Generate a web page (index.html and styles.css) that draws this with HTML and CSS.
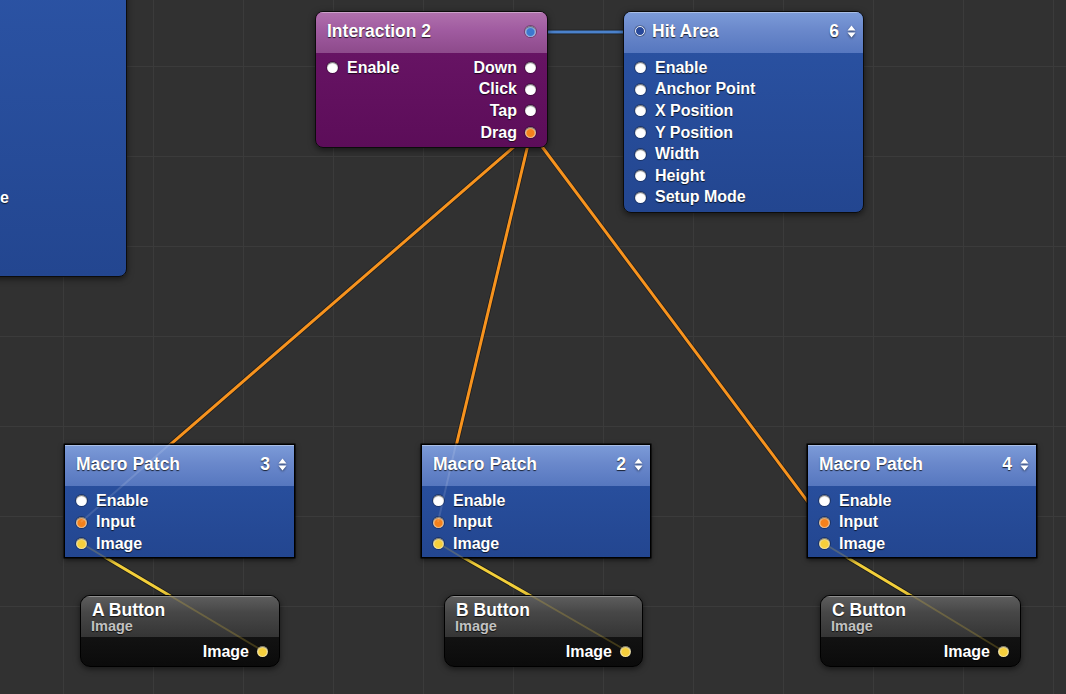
FILE: index.html
```html
<!DOCTYPE html>
<html lang="en">
<head>
  <meta charset="UTF-8">
  <title>Patch Editor</title>
  <link rel="stylesheet" href="styles.css">
</head>
<body>
  <div class="canvas">
    <!-- wires sit under the patches -->
    <svg class="wires" width="1066" height="694" viewBox="0 0 1066 694">
      <g class="wire-shade">
        <line x1="531" y1="132" x2="81" y2="522"/>
        <line x1="531" y1="132" x2="438" y2="522"/>
        <line x1="531" y1="132" x2="823" y2="522"/>
        <line x1="81" y1="543" x2="263" y2="651"/>
        <line x1="438" y1="543" x2="627" y2="651"/>
        <line x1="823" y1="543" x2="1003" y2="651"/>
        <line x1="531" y1="32" x2="639" y2="32"/>
      </g>
      <g class="wire-orange">
        <line x1="531" y1="132" x2="81" y2="522"/>
        <line x1="531" y1="132" x2="438" y2="522"/>
        <line x1="531" y1="132" x2="823" y2="522"/>
      </g>
      <g class="wire-yellow">
        <line x1="81" y1="543" x2="263" y2="651"/>
        <line x1="438" y1="543" x2="627" y2="651"/>
        <line x1="823" y1="543" x2="1003" y2="651"/>
      </g>
      <line class="wire-blue" x1="531" y1="32" x2="639" y2="32"/>
    </svg>

    <div class="node node-layer offscreen">
      <span class="offscreen-label">Image</span>
    </div>

    <div class="node node-interaction" style="left:315px;top:11px;width:233px;">
      <div class="node-head">
        <span class="node-title">Interaction 2</span>
        <span class="port port-blue"></span>
      </div>
      <div class="node-body">
        <div class="row">
          <div class="pin in"><span class="port"></span><span>Enable</span></div>
          <div class="pin out"><span>Down</span><span class="port"></span></div>
        </div>
        <div class="row row-end">
          <div class="pin out"><span>Click</span><span class="port"></span></div>
        </div>
        <div class="row row-end">
          <div class="pin out"><span>Tap</span><span class="port"></span></div>
        </div>
        <div class="row row-end">
          <div class="pin out"><span>Drag</span><span class="port port-orange"></span></div>
        </div>
      </div>
    </div>

    <div class="node node-layer" style="left:623px;top:11px;width:241px;">
      <div class="node-head">
        <span class="port port-hollow"></span>
        <span class="node-title">Hit Area</span>
        <span class="stepper">6
          <svg width="9" height="13" viewBox="0 0 9 13"><path d="M4.5 0.5L8.5 5.5H0.5Z M4.5 12.5L8.5 7.5H0.5Z" fill="#fff"/></svg>
        </span>
      </div>
      <div class="node-body">
        <div class="row"><div class="pin in"><span class="port"></span><span>Enable</span></div></div>
        <div class="row"><div class="pin in"><span class="port"></span><span>Anchor Point</span></div></div>
        <div class="row"><div class="pin in"><span class="port"></span><span>X Position</span></div></div>
        <div class="row"><div class="pin in"><span class="port"></span><span>Y Position</span></div></div>
        <div class="row"><div class="pin in"><span class="port"></span><span>Width</span></div></div>
        <div class="row"><div class="pin in"><span class="port"></span><span>Height</span></div></div>
        <div class="row"><div class="pin in"><span class="port"></span><span>Setup Mode</span></div></div>
      </div>
    </div>

    <div class="node node-layer node-macro" style="left:64px;top:444px;width:231px;">
      <div class="node-head">
        <span class="node-title">Macro Patch</span>
        <span class="stepper">3
          <svg width="9" height="13" viewBox="0 0 9 13"><path d="M4.5 0.5L8.5 5.5H0.5Z M4.5 12.5L8.5 7.5H0.5Z" fill="#fff"/></svg>
        </span>
      </div>
      <div class="node-body">
        <div class="row"><div class="pin in"><span class="port"></span><span>Enable</span></div></div>
        <div class="row"><div class="pin in"><span class="port port-orange"></span><span>Input</span></div></div>
        <div class="row"><div class="pin in"><span class="port port-yellow"></span><span>Image</span></div></div>
      </div>
    </div>

    <div class="node node-layer node-macro" style="left:421px;top:444px;width:230px;">
      <div class="node-head">
        <span class="node-title">Macro Patch</span>
        <span class="stepper">2
          <svg width="9" height="13" viewBox="0 0 9 13"><path d="M4.5 0.5L8.5 5.5H0.5Z M4.5 12.5L8.5 7.5H0.5Z" fill="#fff"/></svg>
        </span>
      </div>
      <div class="node-body">
        <div class="row"><div class="pin in"><span class="port"></span><span>Enable</span></div></div>
        <div class="row"><div class="pin in"><span class="port port-orange"></span><span>Input</span></div></div>
        <div class="row"><div class="pin in"><span class="port port-yellow"></span><span>Image</span></div></div>
      </div>
    </div>

    <div class="node node-layer node-macro" style="left:807px;top:444px;width:230px;">
      <div class="node-head">
        <span class="node-title">Macro Patch</span>
        <span class="stepper">4
          <svg width="9" height="13" viewBox="0 0 9 13"><path d="M4.5 0.5L8.5 5.5H0.5Z M4.5 12.5L8.5 7.5H0.5Z" fill="#fff"/></svg>
        </span>
      </div>
      <div class="node-body">
        <div class="row"><div class="pin in"><span class="port"></span><span>Enable</span></div></div>
        <div class="row"><div class="pin in"><span class="port port-orange"></span><span>Input</span></div></div>
        <div class="row"><div class="pin in"><span class="port port-yellow"></span><span>Image</span></div></div>
      </div>
    </div>

    <div class="node node-image" style="left:80px;top:595px;width:200px;">
      <div class="image-head">
        <span class="node-title">A Button</span>
        <span class="node-sub">Image</span>
      </div>
      <div class="image-body">
        <div class="pin out"><span>Image</span><span class="port port-yellow"></span></div>
      </div>
    </div>

    <div class="node node-image" style="left:444px;top:595px;width:199px;">
      <div class="image-head">
        <span class="node-title">B Button</span>
        <span class="node-sub">Image</span>
      </div>
      <div class="image-body">
        <div class="pin out"><span>Image</span><span class="port port-yellow"></span></div>
      </div>
    </div>

    <div class="node node-image" style="left:820px;top:595px;width:201px;">
      <div class="image-head">
        <span class="node-title">C Button</span>
        <span class="node-sub">Image</span>
      </div>
      <div class="image-body">
        <div class="pin out"><span>Image</span><span class="port port-yellow"></span></div>
      </div>
    </div>

    <!-- faint wire ghosts drawn through the patches -->
    <svg class="wires ghosts" width="1066" height="694" viewBox="0 0 1066 694">
      <line class="ghost" x1="170" y1="444" x2="81" y2="522"/>
      <line class="ghost" x1="456" y1="444" x2="438" y2="522"/>
      <line class="ghost ghost-y" x1="106" y1="558" x2="81" y2="543"/>
      <line class="ghost ghost-y" x1="169" y1="595" x2="263" y2="651"/>
      <line class="ghost ghost-y" x1="463" y1="558" x2="438" y2="543"/>
      <line class="ghost ghost-y" x1="530" y1="595" x2="627" y2="651"/>
      <line class="ghost ghost-y" x1="848" y1="558" x2="823" y2="543"/>
      <line class="ghost ghost-y" x1="911" y1="595" x2="1003" y2="651"/>
    </svg>
  </div>
</body>
</html>
```

FILE: styles.css
```css
:root {
  --canvas: #313131;
  --grid: #3b3b3b;
  --orange: #f7931e;
  --yellow: #f3cf3a;
  --blue-wire: #4b82cc;
}

html, body {
  margin: 0;
  padding: 0;
  height: 100%;
  overflow: hidden;
}

body {
  font-family: 'Liberation Sans', Arial, sans-serif;
  font-weight: 700;
  color: #fff;
  background: var(--canvas);
}

.canvas {
  position: relative;
  width: 1066px;
  height: 694px;
  overflow: hidden;
  background-color: var(--canvas);
  background-image:
    linear-gradient(to right, var(--grid) 1px, transparent 1px),
    linear-gradient(to bottom, var(--grid) 1px, transparent 1px);
  background-size: 90px 90px;
  background-position: 63px 66px;
}

/* wires */
.wires {
  position: absolute;
  left: 0;
  top: 0;
  pointer-events: none;
}

.wire-shade line {
  stroke: rgba(0, 0, 0, 0.45);
  stroke-width: 4.5;
}

.wire-orange line {
  stroke: var(--orange);
  stroke-width: 3;
}

.wire-yellow line {
  stroke: var(--yellow);
  stroke-width: 3;
}

.wire-blue {
  stroke: var(--blue-wire);
  stroke-width: 3;
}

.ghosts {
  z-index: 5;
}

.ghost {
  stroke: rgba(255, 255, 255, 0.12);
  stroke-width: 2;
}

.ghost-y {
  stroke: rgba(243, 207, 58, 0.22);
}

/* patches */
.node {
  position: absolute;
  box-sizing: border-box;
  border: 1px solid #0c0c0c;
  border-radius: 8px;
  overflow: hidden;
  box-shadow: 0 2px 6px rgba(0, 0, 0, 0.55);
  text-shadow: 0 1px 1px rgba(0, 0, 0, 0.75);
}

.node-head {
  height: 41px;
  box-sizing: border-box;
  display: flex;
  align-items: center;
  gap: 7px;
  padding: 0 7px 3px 11px;
  box-shadow: inset 0 1px 0 rgba(255, 255, 255, 0.35);
}

.node-title {
  font-size: 17.5px;
  line-height: 18px;
  flex: 1;
}

.stepper {
  display: flex;
  align-items: center;
  gap: 8px;
  font-size: 17.5px;
}

.stepper svg {
  filter: drop-shadow(0 1px 1px rgba(0, 0, 0, 0.5));
}

.node-body {
  padding: 4px 0 4px;
}

.row {
  height: 21.6px;
  display: flex;
  align-items: center;
  justify-content: space-between;
  font-size: 16px;
}

.row-end {
  justify-content: flex-end;
}

.pin {
  display: flex;
  align-items: center;
}

.pin.in {
  gap: 9px;
  padding-left: 11px;
}

.pin.out {
  gap: 8px;
  padding-right: 11px;
}

/* ports */
.port {
  width: 11px;
  height: 11px;
  border-radius: 50%;
  flex: none;
  background: radial-gradient(circle at 50% 60%, #fff 55%, #d9d9d9 100%);
  box-shadow: inset 0 1px 1px rgba(0, 0, 0, 0.55), 0 0 0 1px rgba(0, 0, 0, 0.3);
}

.port-orange {
  background: radial-gradient(circle at 50% 55%, #f4811c 0, #f4811c 42%, #f7d7b0 62%, #fff 80%);
}

.port-yellow {
  background: radial-gradient(circle at 50% 55%, #f6cf3c 0, #f6cf3c 42%, #faeeb8 62%, #fff 80%);
}

.port-blue {
  background: radial-gradient(circle at 50% 55%, #3c78cf 0, #3c78cf 42%, #b8cdee 62%, #fff 80%);
}

.port-hollow {
  width: 10px;
  height: 10px;
  box-sizing: border-box;
  background: #27489a;
  border: 1.5px solid #e8ecf5;
  box-shadow: 0 0 0 1px rgba(0, 0, 0, 0.25);
}

/* interaction patch */
.node-interaction {
  background: linear-gradient(to bottom, #6b1668 0%, #5c0d59 100%);
}

.node-interaction .node-head {
  background: linear-gradient(to bottom, #b071ad 0%, #a05ba0 45%, #8d4a8b 100%);
  padding-right: 11px;
}

/* layer patches */
.node-layer {
  background: linear-gradient(to bottom, #2b53a4 0%, #234690 100%);
}

.node-layer .node-head {
  background: linear-gradient(to bottom, #7c9bd8 0%, #6a88cb 45%, #5677bf 100%);
}

.node-macro {
  border-radius: 0;
  border-color: #000;
  box-shadow: 0 0 0 0.5px #000, 0 2px 5px rgba(0, 0, 0, 0.6);
}

.node-macro .node-body {
  padding: 4px 0 2px;
}

.offscreen {
  left: -200px;
  top: -20px;
  width: 327px;
  height: 297px;
}

.offscreen-label {
  position: absolute;
  right: 117px;
  top: 207px;
  font-size: 16px;
  line-height: 20px;
}

/* image patches */
.node-image {
  height: 72px;
  border-radius: 10px;
  border-color: #000;
  background: linear-gradient(to bottom, #1c1c1c 0%, #0b0b0b 100%);
}

.image-head {
  height: 41px;
  box-sizing: border-box;
  padding: 5px 11px 0 10px;
  display: flex;
  flex-direction: column;
  background: linear-gradient(to bottom, #5e5e5e 0%, #474747 40%, #353535 100%);
  box-shadow: inset 0 1px 0 rgba(255, 255, 255, 0.3);
}

.image-head .node-title {
  flex: none;
  padding-left: 1px;
}

.node-sub {
  font-size: 14.5px;
  line-height: 15px;
  color: #c2c2c2;
}

.image-body {
  height: 29px;
  display: flex;
  align-items: center;
  justify-content: flex-end;
  font-size: 16px;
}
```
